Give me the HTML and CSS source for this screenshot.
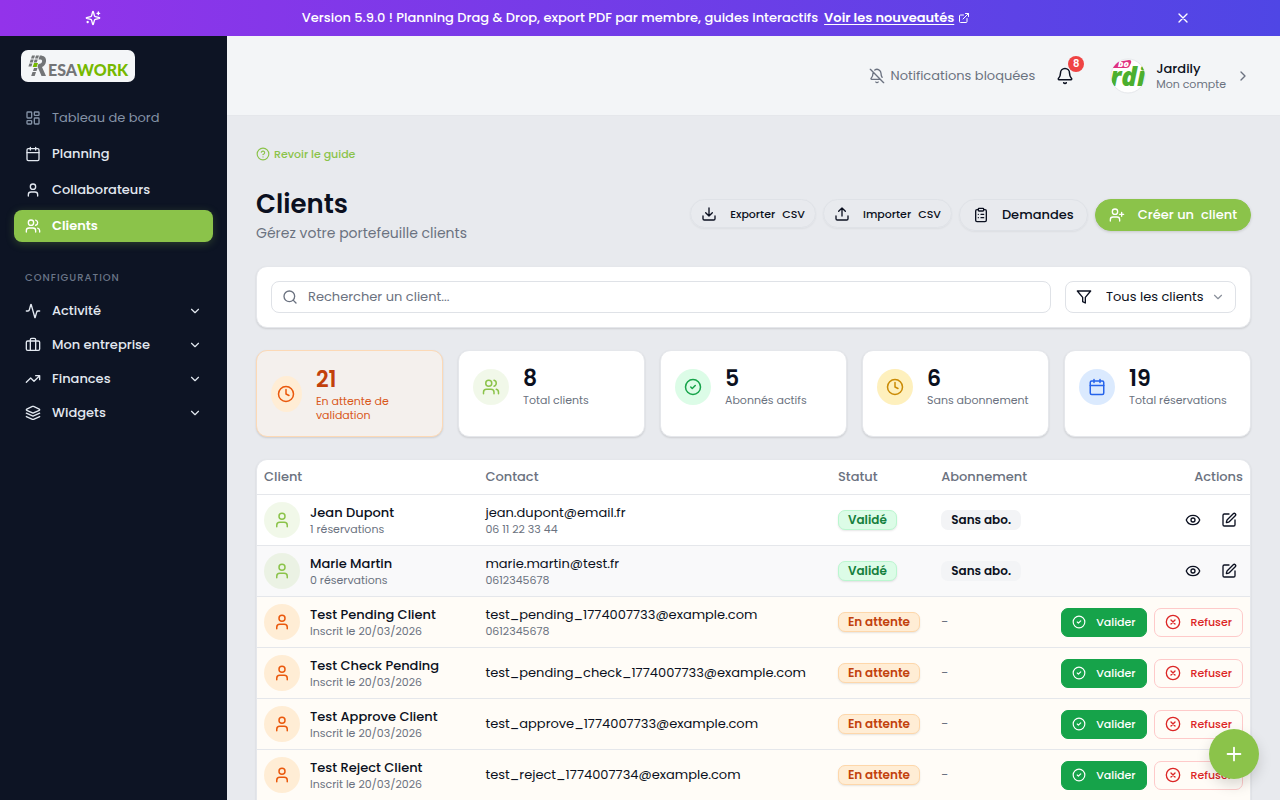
FILE: index.html
```html
<!DOCTYPE html>
<html lang="fr">
<head>
<meta charset="utf-8">
<meta name="viewport" content="width=device-width, initial-scale=1">
<title>Clients - ResaWork</title>
<link rel="stylesheet" href="styles.css">
</head>

<body>

<!-- Icons -->
<svg class="sprite" aria-hidden="true">
  <symbol id="i-sparkles" viewBox="0 0 24 24"><path d="M9.94 15.5A2 2 0 0 0 8.5 14.06l-6.14-1.58a.5.5 0 0 1 0-.96L8.5 9.94A2 2 0 0 0 9.94 8.5l1.58-6.14a.5.5 0 0 1 .96 0l1.58 6.14a2 2 0 0 0 1.44 1.44l6.14 1.58a.5.5 0 0 1 0 .96l-6.14 1.58a2 2 0 0 0-1.44 1.44l-1.58 6.14a.5.5 0 0 1-.96 0zM20 3v4M22 5h-4M4 17v2M5 18H3"/></symbol>
  <symbol id="i-external" viewBox="0 0 24 24"><path d="M15 3h6v6M10 14 21 3M18 13v6a2 2 0 0 1-2 2H5a2 2 0 0 1-2-2V8a2 2 0 0 1 2-2h6"/></symbol>
  <symbol id="i-x" viewBox="0 0 24 24"><path d="M18 6 6 18M6 6l12 12"/></symbol>
  <symbol id="i-dashboard" viewBox="0 0 24 24"><rect width="7" height="9" x="3" y="3" rx="1"/><rect width="7" height="5" x="14" y="3" rx="1"/><rect width="7" height="9" x="14" y="12" rx="1"/><rect width="7" height="5" x="3" y="16" rx="1"/></symbol>
  <symbol id="i-calendar" viewBox="0 0 24 24"><path d="M8 2v4M16 2v4M3 10h18"/><rect width="18" height="18" x="3" y="4" rx="2"/></symbol>
  <symbol id="i-user" viewBox="0 0 24 24"><path d="M19 21v-2a4 4 0 0 0-4-4H9a4 4 0 0 0-4 4v2"/><circle cx="12" cy="7" r="4"/></symbol>
  <symbol id="i-users" viewBox="0 0 24 24"><path d="M16 21v-2a4 4 0 0 0-4-4H6a4 4 0 0 0-4 4v2M22 21v-2a4 4 0 0 0-3-3.87M16 3.13a4 4 0 0 1 0 7.75"/><circle cx="9" cy="7" r="4"/></symbol>
  <symbol id="i-user-plus" viewBox="0 0 24 24"><path d="M16 21v-2a4 4 0 0 0-4-4H6a4 4 0 0 0-4 4v2M19 8v6M22 11h-6"/><circle cx="9" cy="7" r="4"/></symbol>
  <symbol id="i-activity" viewBox="0 0 24 24"><path d="M22 12h-2.48a2 2 0 0 0-1.93 1.46l-2.35 8.36a.25.25 0 0 1-.48 0L9.24 2.18a.25.25 0 0 0-.48 0l-2.35 8.36A2 2 0 0 1 4.49 12H2"/></symbol>
  <symbol id="i-case" viewBox="0 0 24 24"><path d="M8 20V4a2 2 0 0 1 2-2h4a2 2 0 0 1 2 2v16"/><rect width="20" height="14" x="2" y="6" rx="2"/></symbol>
  <symbol id="i-trending" viewBox="0 0 24 24"><path d="m22 7-8.5 8.5-5-5L2 17M16 7h6v6"/></symbol>
  <symbol id="i-layers" viewBox="0 0 24 24"><path d="m12.83 2.18a2 2 0 0 0-1.66 0L2.6 6.08a1 1 0 0 0 0 1.83l8.58 3.91a2 2 0 0 0 1.66 0l8.58-3.9a1 1 0 0 0 0-1.83ZM2 12.3l9.17 4.17a2 2 0 0 0 1.66 0L22 12.3M2 17.3l9.17 4.17a2 2 0 0 0 1.66 0L22 17.3"/></symbol>
  <symbol id="i-down" viewBox="0 0 24 24"><path d="m6 9 6 6 6-6"/></symbol>
  <symbol id="i-right" viewBox="0 0 24 24"><path d="m9 18 6-6-6-6"/></symbol>
  <symbol id="i-bell" viewBox="0 0 24 24"><path d="M10.27 21a2 2 0 0 0 3.46 0M3.26 15.33A1 1 0 0 0 4 17h16a1 1 0 0 0 .74-1.67C19.41 13.96 18 12.5 18 8A6 6 0 0 0 6 8c0 4.5-1.41 5.96-2.74 7.33"/></symbol>
  <symbol id="i-bell-off" viewBox="0 0 24 24"><path d="M10.27 21a2 2 0 0 0 3.46 0M17 17H4a1 1 0 0 1-.74-1.67C4.59 13.96 6 12.5 6 8a6 6 0 0 1 .26-1.74M2 2l20 20M8.67 3.01A6 6 0 0 1 18 8c0 2.69.77 4.65 1.71 6"/></symbol>
  <symbol id="i-help" viewBox="0 0 24 24"><circle cx="12" cy="12" r="10"/><path d="M9.09 9a3 3 0 0 1 5.83 1c0 2-3 3-3 3M12 17h.01"/></symbol>
  <symbol id="i-download" viewBox="0 0 24 24"><path d="M21 15v4a2 2 0 0 1-2 2H5a2 2 0 0 1-2-2v-4M7 10l5 5 5-5M12 15V3"/></symbol>
  <symbol id="i-upload" viewBox="0 0 24 24"><path d="M21 15v4a2 2 0 0 1-2 2H5a2 2 0 0 1-2-2v-4M17 8l-5-5-5 5M12 3v12"/></symbol>
  <symbol id="i-clipboard" viewBox="0 0 24 24"><rect width="8" height="4" x="8" y="2" rx="1"/><path d="M16 4h2a2 2 0 0 1 2 2v14a2 2 0 0 1-2 2H6a2 2 0 0 1-2-2V6a2 2 0 0 1 2-2h2M12 11h4M12 16h4M8 11h.01M8 16h.01"/></symbol>
  <symbol id="i-search" viewBox="0 0 24 24"><circle cx="11" cy="11" r="8"/><path d="m21 21-4.3-4.3"/></symbol>
  <symbol id="i-filter" viewBox="0 0 24 24"><path d="M22 3H2l8 9.46V19l4 2v-8.54z"/></symbol>
  <symbol id="i-clock" viewBox="0 0 24 24"><circle cx="12" cy="12" r="10"/><path d="M12 6v6l4 2"/></symbol>
  <symbol id="i-check" viewBox="0 0 24 24"><circle cx="12" cy="12" r="10"/><path d="m9 12 2 2 4-4"/></symbol>
  <symbol id="i-cancel" viewBox="0 0 24 24"><circle cx="12" cy="12" r="10"/><path d="m15 9-6 6M9 9l6 6"/></symbol>
  <symbol id="i-eye" viewBox="0 0 24 24"><path d="M2.06 12.35a1 1 0 0 1 0-.7 10.75 10.75 0 0 1 19.88 0 1 1 0 0 1 0 .7 10.75 10.75 0 0 1-19.88 0"/><circle cx="12" cy="12" r="3"/></symbol>
  <symbol id="i-edit" viewBox="0 0 24 24"><path d="M12 3H5a2 2 0 0 0-2 2v14a2 2 0 0 0 2 2h14a2 2 0 0 0 2-2v-7"/><path d="M18.38 2.63a1 1 0 0 1 3 3l-9.02 9a2 2 0 0 1-.85.51l-2.87.84a.5.5 0 0 1-.62-.62l.84-2.87a2 2 0 0 1 .5-.85z"/></symbol>
  <symbol id="i-plus" viewBox="0 0 24 24"><path d="M5 12h14M12 5v14"/></symbol>
</svg>

<div class="banner">
  <div class="banner-inner">
    <svg class="icon"><use href="#i-sparkles"/></svg>
    <p class="banner-text">
      <span>Version 5.9.0 ! Planning Drag &amp; Drop, export PDF par membre, guides interactifs</span>
      <a href="#">Voir les nouveautés</a>
      <svg class="icon icon-xs"><use href="#i-external"/></svg>
    </p>
    <button class="banner-close" type="button" aria-label="Fermer"><svg class="icon"><use href="#i-x"/></svg></button>
  </div>
</div>

<div class="layout">
  <aside class="sidebar">
    <a class="logo" href="#" aria-label="ResaWork">
      <svg class="logo-art" viewBox="0 0 114 32">
        <g fill="#737577">
          <path d="M11 5.500h3l-1 3h-3zM9.700 9.500h3l-1 3h-3zM8.400 13.500h3l-1 3h-3z"/>
          <path d="M15 5.500h3l-1 3h-3zM13.700 9.500h3l-1 3h-3zM13 18h3.500l-1 3H12zM11.500 22h3.500l-1.300 4h-3.500z"/>
          <path d="M19 5.500c4 0 6.500 2 6 6-.4 3-2 4.700-4 5.500l4 9h-4.500l-4-9.500 1-2.500c2 0 3.500-1 3.600-2.700.1-1.300-.6-1.800-2-1.800h-1.600l1.300-4z"/>
        </g>
        <path fill="#76b900" d="M13 13h4l-1.300 4h-4z"/>
        <text class="logo-grey" x="27" y="26">ESA</text>
        <text class="logo-green" x="56" y="26">WORK</text>
      </svg>
    </a>

    <nav class="nav">
      <a class="nav-item is-muted" href="#"><svg class="icon"><use href="#i-dashboard"/></svg>Tableau de bord</a>
      <a class="nav-item" href="#"><svg class="icon"><use href="#i-calendar"/></svg>Planning</a>
      <a class="nav-item" href="#"><svg class="icon"><use href="#i-user"/></svg>Collaborateurs</a>
      <a class="nav-item is-active" href="#"><svg class="icon"><use href="#i-users"/></svg>Clients</a>
    </nav>

    <h2 class="nav-title">Configuration</h2>
    <nav class="nav nav-config">
      <button class="nav-item" type="button"><svg class="icon"><use href="#i-activity"/></svg>Activité<svg class="icon icon-sm chevron"><use href="#i-down"/></svg></button>
      <button class="nav-item" type="button"><svg class="icon"><use href="#i-case"/></svg>Mon entreprise<svg class="icon icon-sm chevron"><use href="#i-down"/></svg></button>
      <button class="nav-item" type="button"><svg class="icon"><use href="#i-trending"/></svg>Finances<svg class="icon icon-sm chevron"><use href="#i-down"/></svg></button>
      <button class="nav-item" type="button"><svg class="icon"><use href="#i-layers"/></svg>Widgets<svg class="icon icon-sm chevron"><use href="#i-down"/></svg></button>
    </nav>
  </aside>

  <div class="page">
    <header class="topbar">
      <p class="notif-state"><svg class="icon"><use href="#i-bell-off"/></svg>Notifications bloquées</p>
      <button class="bell" type="button" aria-label="Notifications">
        <svg class="icon icon-lg"><use href="#i-bell"/></svg>
        <span class="bell-count">8</span>
      </button>
      <a class="account" href="#">
        <svg class="account-logo" viewBox="0 0 36 36">
          <clipPath id="round"><circle cx="18" cy="18" r="17"/></clipPath>
          <circle cx="18" cy="18" r="17" fill="#fff" stroke="#e5e7eb"/>
          <g clip-path="url(#round)">
            <path d="M1 5 19 2q3 0 2 3l-2 4q-1 1-3 1H2z" fill="#e0317f"/>
            <text class="account-bo" x="8" y="9">bo</text>
            <text class="account-rdi" x="0" y="28">rdi</text>
          </g>
        </svg>
        <span class="account-text"><strong>Jardily</strong><small>Mon compte</small></span>
        <svg class="icon"><use href="#i-right"/></svg>
      </a>
    </header>

    <main class="content">
      <a class="guide" href="#"><svg class="icon icon-sm"><use href="#i-help"/></svg>Revoir le guide</a>

      <div class="heading">
        <div>
          <h1>Clients</h1>
          <p>Gérez votre portefeuille clients</p>
        </div>
        <div class="heading-actions">
          <button class="btn btn-small" type="button"><svg class="icon"><use href="#i-download"/></svg><span>Exporter</span> <span>CSV</span></button>
          <button class="btn btn-small" type="button"><svg class="icon"><use href="#i-upload"/></svg><span>Importer</span> <span>CSV</span></button>
          <button class="btn" type="button"><svg class="icon"><use href="#i-clipboard"/></svg><span>Demandes</span></button>
          <button class="btn btn-primary" type="button"><svg class="icon"><use href="#i-user-plus"/></svg><span>Créer un</span> <span>client</span></button>
        </div>
      </div>

      <form class="card filters">
        <label class="field field-search">
          <svg class="icon"><use href="#i-search"/></svg>
          <input type="search" placeholder="Rechercher un client..." aria-label="Rechercher un client">
        </label>
        <label class="field field-select">
          <svg class="icon"><use href="#i-filter"/></svg>
          <select aria-label="Filtrer les clients"><option>Tous les clients</option></select>
          <svg class="icon icon-sm"><use href="#i-down"/></svg>
        </label>
      </form>

      <section class="stats">
        <div class="card stat stat-pending">
          <span class="disc disc-orange"><svg class="icon icon-lg"><use href="#i-clock"/></svg></span>
          <div><strong>21</strong><p>En attente de validation</p></div>
        </div>
        <div class="card stat">
          <span class="disc disc-lime"><svg class="icon icon-lg"><use href="#i-users"/></svg></span>
          <div><strong>8</strong><p>Total clients</p></div>
        </div>
        <div class="card stat">
          <span class="disc disc-green"><svg class="icon icon-lg"><use href="#i-check"/></svg></span>
          <div><strong>5</strong><p>Abonnés actifs</p></div>
        </div>
        <div class="card stat">
          <span class="disc disc-yellow"><svg class="icon icon-lg"><use href="#i-clock"/></svg></span>
          <div><strong>6</strong><p>Sans abonnement</p></div>
        </div>
        <div class="card stat">
          <span class="disc disc-blue"><svg class="icon icon-lg"><use href="#i-calendar"/></svg></span>
          <div><strong>19</strong><p>Total réservations</p></div>
        </div>
      </section>

      <div class="card table-card">
        <table class="clients">
          <thead>
            <tr>
              <th class="col-client">Client</th>
              <th class="col-contact">Contact</th>
              <th class="col-status">Statut</th>
              <th class="col-plan">Abonnement</th>
              <th class="col-actions">Actions</th>
            </tr>
          </thead>
          <tbody>
            <tr>
              <td><div class="client"><span class="disc disc-lime"><svg class="icon icon-lg"><use href="#i-user"/></svg></span><div><strong>Jean Dupont</strong><small>1 réservations</small></div></div></td>
              <td><div class="contact">jean.dupont@email.fr<small>06 11 22 33 44</small></div></td>
              <td><span class="badge badge-ok">Validé</span></td>
              <td><span class="badge badge-plain">Sans abo.</span></td>
              <td><div class="row-actions"><button class="icon-btn" type="button" aria-label="Voir"><svg class="icon"><use href="#i-eye"/></svg></button><button class="icon-btn" type="button" aria-label="Modifier"><svg class="icon"><use href="#i-edit"/></svg></button></div></td>
            </tr>
            <tr class="is-hover">
              <td><div class="client"><span class="disc disc-lime"><svg class="icon icon-lg"><use href="#i-user"/></svg></span><div><strong>Marie Martin</strong><small>0 réservations</small></div></div></td>
              <td><div class="contact">marie.martin@test.fr<small>0612345678</small></div></td>
              <td><span class="badge badge-ok">Validé</span></td>
              <td><span class="badge badge-plain">Sans abo.</span></td>
              <td><div class="row-actions"><button class="icon-btn" type="button" aria-label="Voir"><svg class="icon"><use href="#i-eye"/></svg></button><button class="icon-btn" type="button" aria-label="Modifier"><svg class="icon"><use href="#i-edit"/></svg></button></div></td>
            </tr>
            <tr class="is-pending">
              <td><div class="client"><span class="disc disc-orange"><svg class="icon icon-lg"><use href="#i-user"/></svg></span><div><strong>Test Pending Client</strong><small>Inscrit le 20/03/2026</small></div></div></td>
              <td><div class="contact">test_pending_1774007733@example.com<small>0612345678</small></div></td>
              <td><span class="badge badge-wait">En attente</span></td>
              <td class="none">-</td>
              <td><div class="row-actions"><button class="act act-ok" type="button"><svg class="icon icon-sm"><use href="#i-check"/></svg>Valider</button><button class="act act-no" type="button"><svg class="icon"><use href="#i-cancel"/></svg>Refuser</button></div></td>
            </tr>
            <tr class="is-pending">
              <td><div class="client"><span class="disc disc-orange"><svg class="icon icon-lg"><use href="#i-user"/></svg></span><div><strong>Test Check Pending</strong><small>Inscrit le 20/03/2026</small></div></div></td>
              <td><div class="contact">test_pending_check_1774007733@example.com</div></td>
              <td><span class="badge badge-wait">En attente</span></td>
              <td class="none">-</td>
              <td><div class="row-actions"><button class="act act-ok" type="button"><svg class="icon icon-sm"><use href="#i-check"/></svg>Valider</button><button class="act act-no" type="button"><svg class="icon"><use href="#i-cancel"/></svg>Refuser</button></div></td>
            </tr>
            <tr class="is-pending">
              <td><div class="client"><span class="disc disc-orange"><svg class="icon icon-lg"><use href="#i-user"/></svg></span><div><strong>Test Approve Client</strong><small>Inscrit le 20/03/2026</small></div></div></td>
              <td><div class="contact">test_approve_1774007733@example.com</div></td>
              <td><span class="badge badge-wait">En attente</span></td>
              <td class="none">-</td>
              <td><div class="row-actions"><button class="act act-ok" type="button"><svg class="icon icon-sm"><use href="#i-check"/></svg>Valider</button><button class="act act-no" type="button"><svg class="icon"><use href="#i-cancel"/></svg>Refuser</button></div></td>
            </tr>
            <tr class="is-pending">
              <td><div class="client"><span class="disc disc-orange"><svg class="icon icon-lg"><use href="#i-user"/></svg></span><div><strong>Test Reject Client</strong><small>Inscrit le 20/03/2026</small></div></div></td>
              <td><div class="contact">test_reject_1774007734@example.com</div></td>
              <td><span class="badge badge-wait">En attente</span></td>
              <td class="none">-</td>
              <td><div class="row-actions"><button class="act act-ok" type="button"><svg class="icon icon-sm"><use href="#i-check"/></svg>Valider</button><button class="act act-no" type="button"><svg class="icon"><use href="#i-cancel"/></svg>Refuser</button></div></td>
            </tr>
          </tbody>
        </table>
      </div>
    </main>
  </div>
</div>

<button class="fab" type="button" aria-label="Ajouter"><svg class="icon"><use href="#i-plus"/></svg></button>

</body>
</html>
```
FILE: styles.css
```css
* {
  box-sizing: border-box;
}

body {
  display: flex;
  flex-direction: column;
  height: 100vh;
  margin: 0;
  overflow: hidden;
  background: #e8eaee;
  color: #0b1020;
  font-family: Poppins, Inter, sans-serif;
  font-size: 13px;
  line-height: 20px;
}

h1, h2, p {
  margin: 0;
}

a {
  color: inherit;
  text-decoration: none;
}

button, input, select {
  margin: 0;
  padding: 0;
  border: 0;
  background: none;
  color: inherit;
  font: inherit;
}

small {
  display: block;
  color: #6b7280;
  font-size: 11px;
  line-height: 14px;
}

.sprite {
  position: absolute;
  width: 0;
  height: 0;
}

.icon {
  flex: none;
  width: 16px;
  height: 16px;
  fill: none;
  stroke: currentColor;
  stroke-width: 2;
  stroke-linecap: round;
  stroke-linejoin: round;
}

.icon-xs {
  width: 12px;
  height: 12px;
}

.icon-sm {
  width: 14px;
  height: 14px;
}

.icon-lg {
  width: 18px;
  height: 18px;
}

/* Banner */
.banner {
  flex: none;
  background: linear-gradient(90deg, #9333ea, #4f46e5);
  color: #fff;
  font-weight: 500;
}

.banner-inner {
  display: flex;
  align-items: center;
  justify-content: space-between;
  max-width: 1110px;
  height: 36px;
  margin: 0 auto;
}

.banner-text {
  display: flex;
  align-items: center;
  gap: 4px;
}

.banner-text a {
  margin-left: 2px;
  font-weight: 600;
  text-decoration: underline;
  text-underline-offset: 2px;
}

.banner-close {
  display: flex;
  padding: 4px;
}

/* Sidebar */
.layout {
  display: flex;
  flex: 1;
  min-height: 0;
}

.sidebar {
  flex: none;
  width: 227px;
  padding: 14px;
  background: #0d1424;
}

.logo {
  display: block;
  width: 114px;
  height: 32px;
  margin: 0 0 20px 7px;
  border-radius: 7px;
  background: #f4f6f8;
}

.logo-art {
  display: block;
}

.logo-grey, .logo-green {
  font-family: Lato, sans-serif;
  font-size: 16px;
  font-weight: 900;
}

.logo-grey {
  fill: #737577;
}

.logo-green {
  fill: #76b900;
}

.nav {
  display: flex;
  flex-direction: column;
  gap: 4px;
}

.nav-config {
  gap: 2px;
}

.nav-item {
  display: flex;
  align-items: center;
  gap: 11px;
  height: 32px;
  padding: 0 11px;
  border-radius: 8px;
  color: #e2e8f0;
  font-weight: 500;
}

.nav-item.is-muted {
  color: #8492a6;
  font-weight: 400;
}

.nav-item.is-active {
  background: #8bc34a;
  box-shadow: 0 2px 8px rgba(139, 195, 74, 0.25);
  color: #fff;
  font-weight: 600;
}

.nav-title {
  margin: 28px 11px 9px;
  color: #6b7688;
  font-size: 10px;
  font-weight: 500;
  line-height: 16px;
  letter-spacing: 1px;
  text-transform: uppercase;
}

.chevron {
  margin-left: auto;
}

/* Top bar */
.page {
  display: flex;
  flex: 1;
  flex-direction: column;
  min-width: 0;
}

.topbar {
  display: flex;
  flex: none;
  align-items: center;
  justify-content: flex-end;
  height: 80px;
  padding: 0 29px;
  border-bottom: 1px solid #e5e7eb;
  background: #f3f5f7;
}

.notif-state {
  display: flex;
  align-items: center;
  gap: 6px;
  color: #6b7280;
}

.bell {
  position: relative;
  display: flex;
  margin: 0 36px 0 21px;
}

.bell-count {
  position: absolute;
  top: -11px;
  right: -10px;
  width: 16px;
  height: 16px;
  border-radius: 50%;
  background: #ef4444;
  color: #fff;
  font-size: 10px;
  font-weight: 600;
  line-height: 16px;
  text-align: center;
}

.account {
  display: flex;
  align-items: center;
}

.account > .icon {
  margin-left: 9px;
  color: #6b7280;
}

.account-logo {
  width: 36px;
  height: 36px;
  margin-right: 10px;
}

.account-bo, .account-rdi {
  font-family: "Open Sans", sans-serif;
  font-style: italic;
  font-weight: 800;
}

.account-bo {
  fill: #fff;
  font-size: 9px;
}

.account-rdi {
  fill: #4caf2f;
  font-size: 26px;
}

.account-text {
  line-height: 17px;
}

.account-text strong {
  font-weight: 500;
}

/* Content */
.content {
  display: flex;
  flex: 1;
  flex-direction: column;
  gap: 22px;
  min-height: 0;
  padding: 28px 29px 0;
  overflow-y: auto;
  scrollbar-width: none;
}

.content > * {
  flex: none;
}

.guide {
  display: flex;
  align-items: center;
  align-self: flex-start;
  gap: 4px;
  color: #8bc34a;
  font-size: 11px;
  font-weight: 500;
}

.heading {
  display: flex;
  align-items: center;
  justify-content: space-between;
}

.heading h1 {
  font-size: 26px;
  font-weight: 600;
  line-height: 36px;
}

.heading p {
  color: #6b7280;
  font-size: 14px;
  line-height: 22px;
}

.heading-actions {
  display: flex;
  align-items: flex-start;
  gap: 7px;
}

.btn {
  display: flex;
  align-items: center;
  gap: 7px;
  height: 32px;
  padding: 0 13px;
  border: 1px solid #dfe2e7;
  border-radius: 16px;
  box-shadow: 0 1px 2px rgba(0, 0, 0, 0.05);
  font-weight: 500;
}

.btn .icon {
  margin-right: 6px;
}

.btn-small {
  height: 29px;
  padding: 0 10px;
  font-size: 11px;
}

.btn-primary {
  border-color: #8bc34a;
  background: #8bc34a;
  box-shadow: 0 1px 3px rgba(0, 0, 0, 0.15);
  color: #fff;
}

.card {
  border: 1px solid #e5e7eb;
  border-radius: 11px;
  background: #fff;
  box-shadow: 0 1px 2px rgba(0, 0, 0, 0.12);
}

.filters {
  display: flex;
  gap: 14px;
  padding: 14px;
}

.field {
  display: flex;
  align-items: center;
  height: 32px;
  padding: 0 10px;
  border: 1px solid #dfe2e7;
  border-radius: 8px;
}

.field-search {
  flex: 1;
  gap: 10px;
  color: #6b7280;
}

.field-search input {
  flex: 1;
  outline: none;
}

.field-search input::placeholder {
  color: #6b7280;
}

.field-select {
  gap: 7px;
}

.field-select select {
  padding-left: 7px;
  appearance: none;
}

.field-select .icon-sm {
  color: #8a909b;
}

/* Stats */
.stats {
  display: grid;
  grid-template-columns: repeat(5, 1fr);
  gap: 15px;
}

.stat {
  display: flex;
  align-items: flex-start;
  gap: 14px;
  min-height: 87px;
  padding: 14px;
}

.stat strong {
  display: block;
  font-size: 22px;
  font-weight: 600;
  line-height: 28px;
}

.stat p {
  color: #6b7280;
  font-size: 11px;
  line-height: 14px;
}

.stat .disc {
  flex-shrink: 1;
  margin-top: 4px;
}

.stat-pending {
  align-items: center;
  border: 1px solid #fcd9b6;
  background: #f4f0ed;
}

.stat-pending .disc {
  margin-top: 0;
}

.stat-pending strong {
  color: #c2410c;
}

.stat-pending p {
  color: #d9581b;
}

.disc {
  display: flex;
  flex: none;
  align-items: center;
  justify-content: center;
  width: 36px;
  height: 36px;
  border-radius: 50%;
}

.disc-orange {
  background: #ffedd5;
  color: #ea580c;
}

.disc-lime {
  background: rgba(139, 195, 74, 0.12);
  color: #8bc34a;
}

.disc-green {
  background: #dcfce7;
  color: #16a34a;
}

.disc-yellow {
  background: #fef0bd;
  color: #ca8a04;
}

.disc-blue {
  background: #dbeafe;
  color: #2563eb;
}

/* Table */
.table-card {
  border-bottom: 0;
  border-radius: 11px 11px 0 0;
  overflow: hidden;
}

.clients {
  width: 100%;
  border-spacing: 0;
  table-layout: fixed;
}

.clients th {
  height: 35px;
  padding: 0 7px;
  border-bottom: 1px solid #e5e7eb;
  color: #6b7280;
  font-weight: 500;
  text-align: left;
}

.clients td {
  height: 51px;
  padding: 0 7px;
  border-bottom: 1px solid #e5e7eb;
}

.col-client {
  width: 22.3%;
}

.col-contact {
  width: 35.5%;
}

.col-status {
  width: 10.4%;
}

.col-plan {
  width: 11%;
}

.clients .col-actions {
  text-align: right;
}

.is-hover td {
  background: #f9f9fa;
}

.is-pending td {
  background: #fffcf7;
}

.client {
  display: flex;
  align-items: center;
  gap: 10px;
  line-height: 18px;
}

.client strong {
  font-weight: 500;
}

.contact {
  line-height: 18px;
}

.clients .none {
  color: #6b7280;
}

.badge {
  display: inline-block;
  padding: 0 9px;
  border: 1px solid transparent;
  border-radius: 7px;
  font-size: 12px;
  font-weight: 600;
  line-height: 18px;
  vertical-align: middle;
  white-space: nowrap;
}

.badge-ok {
  border-color: #bbf7d0;
  background: #dcfce7;
  box-shadow: 0 1px 2px rgba(0, 0, 0, 0.1);
  color: #15803d;
}

.badge-wait {
  border-color: #fed7aa;
  background: #ffedd5;
  box-shadow: 0 1px 2px rgba(0, 0, 0, 0.1);
  color: #c2410c;
}

.badge-plain {
  background: #f3f4f6;
}

.row-actions {
  display: flex;
  justify-content: flex-end;
  gap: 7px;
}

.icon-btn {
  display: flex;
  align-items: center;
  justify-content: center;
  width: 29px;
  height: 29px;
}

.act {
  display: flex;
  align-items: center;
  gap: 10px;
  height: 29px;
  padding: 0 10px;
  border: 1px solid #16a34a;
  border-radius: 7px;
  font-size: 11px;
  font-weight: 500;
}

.act-ok {
  background: #16a34a;
  color: #fff;
}

.act-no {
  border-color: #fecaca;
  color: #dc2626;
}

/* Floating button */
.fab {
  position: fixed;
  right: 21px;
  bottom: 21px;
  display: flex;
  align-items: center;
  justify-content: center;
  width: 50px;
  height: 50px;
  border-radius: 50%;
  background: #8bc34a;
  box-shadow: 0 6px 14px rgba(0, 0, 0, 0.15);
  color: #fff;
}

.fab .icon {
  width: 22px;
  height: 22px;
}
```
